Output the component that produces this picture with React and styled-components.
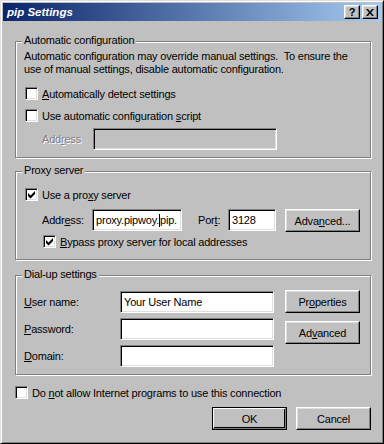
import styled, { createGlobalStyle, css } from "styled-components";

const GlobalStyle = createGlobalStyle`
  html, body {
    margin: 0;
    padding: 0;
    background: #c0c0c0;
  }
`;

const Window = styled.div`
  box-sizing: border-box;
  width: 384px;
  height: 444px;
  background: #c0c0c0;
  border: 1px solid;
  border-color: #dfdfdf #000 #000 #dfdfdf;
  box-shadow: inset 1px 1px #fff, inset -1px -1px #808080;
  padding: 2px;
  display: flex;
  flex-direction: column;
  font-family: "Liberation Sans", Arial, sans-serif;
  font-size: 11px;
  letter-spacing: -0.2px;
  color: #000;
`;

const TitleBar = styled.div`
  flex-shrink: 0;
  height: 18px;
  display: flex;
  align-items: center;
  padding: 0 3px 0 4px;
  background: linear-gradient(to right, #0a246a, #a6caf0);
`;

const Title = styled.div`
  flex: 1;
  color: #fff;
  font-weight: bold;
  font-style: italic;
  font-size: 11.5px;
  letter-spacing: 0;
`;

const CaptionButtons = styled.div`
  display: flex;
  gap: 2px;
`;

const CaptionButton = styled.div`
  box-sizing: border-box;
  width: 16px;
  height: 14px;
  background: #c0c0c0;
  border: 1px solid;
  border-color: #fff #000 #000 #fff;
  box-shadow: inset -1px -1px #808080, inset 1px 1px #dfdfdf;
  display: flex;
  align-items: center;
  justify-content: center;
  font-weight: bold;
  font-size: 11px;
  line-height: 1;
`;

const Body = styled.div`
  flex: 1;
  padding: 20px 10px 0 12px;
  display: flex;
  flex-direction: column;
`;

const Group = styled.div`
  position: relative;
  border: 1px solid #808080;
  box-shadow: inset 1px 1px #fff, 1px 1px #fff;
  margin-top: ${(p) => p.$mt || 0}px;
  padding: ${(p) => p.$pad};
`;

const Legend = styled.div`
  position: absolute;
  top: -8px;
  left: 6px;
  padding: 0 2px;
  line-height: 13px;
  background: #c0c0c0;
`;

const Desc = styled.p`
  margin: 0;
  line-height: 13px;
  white-space: nowrap;
`;

const CheckRow = styled.div`
  display: flex;
  align-items: center;
  height: 17px;
  margin-top: ${(p) => p.$mt || 0}px;
  padding-left: ${(p) => p.$indent || 0}px;
  white-space: nowrap;
`;

const Box = styled.div`
  box-sizing: border-box;
  flex-shrink: 0;
  width: 13px;
  height: 13px;
  margin-left: ${(p) => p.$ml ?? 1}px;
  background: #fff;
  border: 1px solid;
  border-color: #808080 #fff #fff #808080;
  box-shadow: inset 1px 1px #000, inset -1px -1px #dfdfdf;
  svg {
    display: block;
    margin: -1px 0 0 -1px;
  }
`;

const CheckText = styled.span`
  margin-left: 4px;
`;

const U = styled.span`
  text-decoration: underline;
  text-underline-offset: 1px;
`;

const FieldRow = styled.div`
  display: flex;
  align-items: flex-start;
  margin-top: ${(p) => p.$mt || 0}px;
  padding-left: ${(p) => p.$indent || 0}px;
`;

const Label = styled.div`
  flex-shrink: 0;
  width: ${(p) => p.$w}px;
  margin-left: ${(p) => p.$ml || 0}px;
  line-height: 22px;
  white-space: nowrap;
  ${(p) =>
    p.$disabled &&
    css`
      color: #808080;
      text-shadow: 1px 1px #fff;
    `}
`;

const Field = styled.div`
  box-sizing: border-box;
  flex-shrink: 0;
  width: ${(p) => p.$w}px;
  height: 22px;
  background: ${(p) => (p.$disabled ? "#c0c0c0" : "#fff")};
  border: 1px solid;
  border-color: #808080 #fff #fff #808080;
  box-shadow: inset 1px 1px #000, inset -1px -1px #dfdfdf;
  padding: 0 2px 0 3px;
  display: flex;
  align-items: center;
  overflow: hidden;
  white-space: nowrap;
`;

const Caret = styled.span`
  display: inline-block;
  flex-shrink: 0;
  width: 1px;
  height: 13px;
  background: #000;
`;

const Button = styled.div`
  box-sizing: border-box;
  flex-shrink: 0;
  width: 75px;
  height: 23px;
  margin-left: ${(p) => p.$ml || 0}px;
  background: #c0c0c0;
  border: 1px solid;
  border-color: #fff #000 #000 #fff;
  box-shadow: inset -1px -1px #808080, inset 1px 1px #dfdfdf;
  display: flex;
  align-items: center;
  justify-content: center;
  ${(p) =>
    p.$default &&
    css`
      border-color: #000;
      box-shadow: inset -1px -1px #808080, inset 1px 1px #fff,
        inset -2px -2px #000;
    `}
`;

const DialGrid = styled.div`
  display: grid;
  grid-template-columns: 96px 154px;
  grid-auto-rows: 22px;
  row-gap: 5px;
  align-items: center;
`;

const DialRow = styled.div`
  display: flex;
  align-items: flex-start;
`;

const ButtonColumn = styled.div`
  display: flex;
  flex-direction: column;
  gap: 8px;
  margin: -1px 0 0 11px;
`;

const Footer = styled.div`
  display: flex;
  justify-content: flex-end;
  gap: 9px;
  margin-top: 6px;
`;

function Check() {
  return (
    <svg width="13" height="13" viewBox="0 0 13 13">
      <path d="M3 5 L5.5 7.5 L10 3 L10 6 L5.5 10.5 L3 8 Z" fill="#000" />
    </svg>
  );
}

function Checkbox({ checked }) {
  return <Box>{checked && <Check />}</Box>;
}

export default function App() {
  return (
    <>
      <GlobalStyle />
      <Window>
        <TitleBar>
          <Title>pip Settings</Title>
          <CaptionButtons>
            <CaptionButton>?</CaptionButton>
            <CaptionButton>
              <svg width="8" height="7" viewBox="0 0 8 7">
                <path d="M0 0 L2 0 L4 2.5 L6 0 L8 0 L5 3.5 L8 7 L6 7 L4 4.5 L2 7 L0 7 L3 3.5 Z" fill="#000" />
              </svg>
            </CaptionButton>
          </CaptionButtons>
        </TitleBar>

        <Body>
          <Group $pad="8px 8px 7px 8px">
            <Legend>Automatic configuration</Legend>
            <Desc>
              Automatic configuration may override manual settings.&nbsp; To ensure the
              <br />
              use of manual settings, disable automatic configuration.
            </Desc>
            <CheckRow $mt={9}>
              <Checkbox />
              <CheckText>
                <U>A</U>utomatically detect settings
              </CheckText>
            </CheckRow>
            <CheckRow $mt={5}>
              <Checkbox />
              <CheckText>
                Use automatic configuration <U>s</U>cript
              </CheckText>
            </CheckRow>
            <FieldRow $mt={4} $indent={18}>
              <Label $w={51} $disabled>
                Add<U>r</U>ess
              </Label>
              <Field $w={184} $disabled />
            </FieldRow>
          </Group>

          <Group $mt={13} $pad="14px 8px 9px 8px">
            <Legend>Proxy server</Legend>
            <CheckRow>
              <Checkbox checked />
              <CheckText>
                Use a pro<U>x</U>y server
              </CheckText>
            </CheckRow>
            <FieldRow $mt={6} $indent={18}>
              <Label $w={50}>
                Addr<U>e</U>ss:
              </Label>
              <Field $w={90}>
                proxy.pipwoy.
                <Caret />
                pip.
              </Field>
              <Label $w={30} $ml={16}>
                Por<U>t</U>:
              </Label>
              <Field $w={48}>3128</Field>
              <Button $ml={9}>
                Adva<U>n</U>ced...
              </Button>
            </FieldRow>
            <CheckRow $mt={1} $indent={18}>
              <Checkbox checked />
              <CheckText>
                <U>B</U>ypass proxy server for local addresses
              </CheckText>
            </CheckRow>
          </Group>

          <Group $mt={15} $pad="15px 8px 7px 8px">
            <Legend>Dial-up settings</Legend>
            <DialRow>
              <DialGrid>
                <div>
                  <U>U</U>ser name:
                </div>
                <Field $w={154}>Your User Name</Field>
                <div>
                  <U>P</U>assword:
                </div>
                <Field $w={154} />
                <div>
                  <U>D</U>omain:
                </div>
                <Field $w={154} />
              </DialGrid>
              <ButtonColumn>
                <Button>
                  Pr<U>o</U>perties
                </Button>
                <Button>
                  Ad<U>v</U>anced
                </Button>
              </ButtonColumn>
            </DialRow>
          </Group>

          <CheckRow $mt={9}>
            <Box $ml={0} />
            <CheckText>
              Do <U>n</U>ot allow Internet programs to use this connection
            </CheckText>
          </CheckRow>

          <Footer>
            <Button $default>OK</Button>
            <Button>Cancel</Button>
          </Footer>
        </Body>
      </Window>
    </>
  );
}
